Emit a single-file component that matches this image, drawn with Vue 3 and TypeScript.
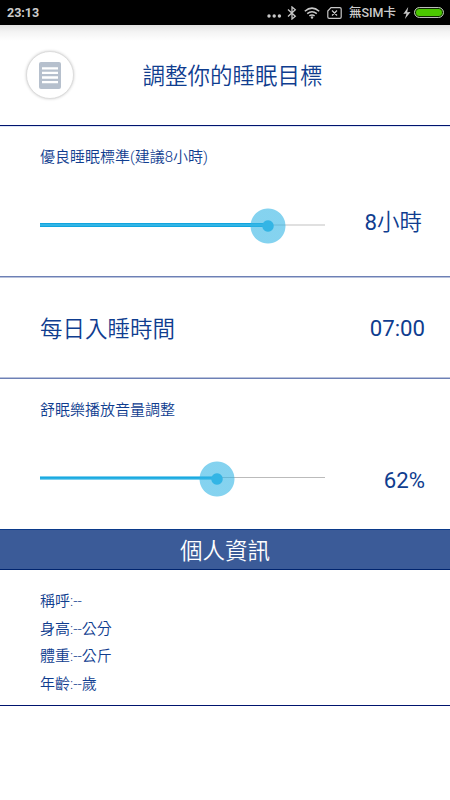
<script setup lang="ts">
import { ref, computed } from 'vue'

const hours = ref(8)
const maxHours = 10
const volume = ref(62)
const bedtime = ref('07:00')

const hoursPercent = computed(() => (hours.value / maxHours) * 100)

const profile = [
  { label: '稱呼', value: '--' },
  { label: '身高', value: '--公分' },
  { label: '體重', value: '--公斤' },
  { label: '年齡', value: '--歲' },
]
</script>

<template>
  <div class="screen">
    <div class="status">
      <span class="clock">23:13</span>
      <svg class="dots" width="15" height="4" viewBox="0 0 15 4">
        <circle cx="2" cy="2" r="1.7" /><circle cx="7.2" cy="2" r="1.7" /><circle cx="12.4" cy="2" r="1.7" />
      </svg>
      <svg class="bluetooth" width="10" height="14" viewBox="0 0 10 14">
        <path d="M1 3.6 8.3 10.2 5 13V1l3.3 2.8L1 10.4" />
      </svg>
      <svg class="wifi" width="16" height="12" viewBox="0 0 16 12">
        <path d="M.8 4.3Q8-2 15.2 4.3M3.2 6.7q4.8-4 9.6 0M5.4 8.9q2.6-2 5.2 0" />
        <circle cx="8" cy="10.5" r="1.2" />
      </svg>
      <svg class="sim" width="15" height="12" viewBox="0 0 15 12">
        <path d="M4 .7h8.8q1.4 0 1.4 1.3v8q0 1.3-1.4 1.3H2.2Q.8 11.3 .8 10V4zM5 3.5l5 5M10 3.5l-5 5" />
      </svg>
      <span class="carrier">無SIM卡</span>
      <svg class="bolt" width="8" height="12" viewBox="0 0 8 12">
        <path d="M5.2 0 .3 6.9l3.2-.3L1.9 12 7.5 4.9l-3.3.3z" />
      </svg>
      <span class="battery"></span>
    </div>

    <header class="header">
      <button class="menu" aria-label="選單">
        <svg width="22" height="27" viewBox="0 0 22 27">
          <rect width="22" height="27" rx="2" fill="#b6c0cd" />
          <path d="M3 6.3h16M3 10.9h16M3 15.5h16M3 20.1h16" stroke="#fff" stroke-width="2.3" />
        </svg>
      </button>
      <h1 class="title">調整你的睡眠目標</h1>
    </header>

    <section class="goal">
      <p class="caption">優良睡眠標準(建議8小時)</p>
      <div class="row">
        <div class="slider">
          <div class="fill" :style="{ width: hoursPercent + '%' }"><i class="thumb"></i></div>
        </div>
        <span class="value"><span class="number">{{ hours }}</span>小時</span>
      </div>
    </section>

    <section class="bedtime">
      <span class="label">每日入睡時間</span>
      <span class="number">{{ bedtime }}</span>
    </section>

    <section class="volume">
      <p class="caption">舒眠樂播放音量調整</p>
      <div class="row">
        <div class="slider">
          <div class="fill" :style="{ width: volume + '%' }"><i class="thumb"></i></div>
        </div>
        <span class="value number">{{ volume }}%</span>
      </div>
    </section>

    <h2 class="banner">個人資訊</h2>

    <ul class="profile">
      <li v-for="item in profile" :key="item.label">{{ item.label }}:{{ item.value }}</li>
    </ul>
  </div>
</template>

<style>
body {
  background: #fff;
}
</style>

<style scoped>
.screen {
  width: 450px;
  height: 800px;
  overflow: hidden;
  background: #fff;
  color: #0f3d8f;
  font-family: Roboto, "Noto Sans CJK TC", sans-serif;
  font-size: 22.5px;
  font-weight: 350;
}
.screen * {
  box-sizing: border-box;
}
.status {
  display: flex;
  align-items: center;
  height: 25px;
  padding: 0 6px 0 7px;
  background: #000;
  color: #ccc;
  font-size: 12.5px;
  line-height: 24px;
  font-weight: 500;
}
.status svg {
  flex: none;
  fill: #c8c8c8;
}
.clock {
  margin-right: auto;
  font-weight: 700;
}
.dots {
  margin: 7px 5px 0 0;
}
.status .bluetooth {
  margin-right: 7px;
  fill: none;
  stroke: #c8c8c8;
  stroke-width: 1.3;
}
.status .wifi {
  margin-right: 7px;
}
.wifi path {
  fill: none;
  stroke: #c8c8c8;
  stroke-width: 1.5;
}
.status .sim {
  margin-right: 7px;
  fill: none;
  stroke: #c8c8c8;
  stroke-width: 1.2;
}
.carrier {
  width: 47px;
  white-space: nowrap;
}
.bolt {
  margin: 1px 3px 0 7px;
}
.battery {
  width: 30px;
  height: 11px;
  border: 1px solid #bbb;
  border-radius: 6px;
  background: #4bc800;
  box-shadow: inset 0 0 0 1px #102800;
}
.header {
  display: flex;
  align-items: center;
  height: 101px;
  padding-left: 26px;
  border-bottom: 1px solid #00146e;
  background: linear-gradient(#e2e2e2, #f4f4f4 7px, #fff 16px);
}
.menu {
  display: flex;
  align-items: center;
  justify-content: center;
  width: 48px;
  height: 48px;
  padding: 0;
  border: 1px solid #ddd;
  border-radius: 50%;
  background: #fff;
  box-shadow: 0 0 3px #ccc;
}
.title {
  margin: 2px 0 0 68.5px;
  font-size: 22.5px;
  font-weight: 350;
  line-height: 30px;
}
.caption {
  margin: 0;
  font-size: 15px;
  line-height: 20px;
}
.number {
  font-size: 22.2px;
  font-weight: 380;
}
.goal {
  height: 152px;
  padding: 20px 25px 0 40px;
  border-top: 1px solid #dde6f5;
  border-bottom: 2px solid;
  border-image: linear-gradient(#dde6f5 1px, #6d80b5 1px, #6d80b5 151px, #b9c2dc 151px) 1 0 2;
}
.row {
  display: flex;
  align-items: center;
  justify-content: space-between;
  height: 36px;
  margin-top: 40px;
}
.slider {
  display: flex;
  align-items: center;
  width: 285px;
  height: 36px;
  background: linear-gradient(#e0e0e0, #e0e0e0) 0 17px / 100% 2px no-repeat;
}
.fill {
  position: relative;
  height: 4px;
  background: linear-gradient(#10a5df 1px, #33b5e5 1px, #33b5e5 3px, #10a5df 3px);
}
.thumb {
  position: absolute;
  top: -15px;
  right: -18px;
  width: 36px;
  height: 36px;
  border-radius: 50%;
  background: radial-gradient(circle, #33b5e5 5.2px, rgba(51, 181, 229, 0.6) 6.2px, rgba(51, 181, 229, 0.6) 17px, transparent 18px);
}
.goal .value {
  margin: -10px 3px 0 0;
}
.bedtime {
  display: flex;
  align-items: center;
  justify-content: space-between;
  height: 101px;
  padding: 0 25px 0 40px;
  border-bottom: 1px solid #6d80b5;
  box-shadow: inset 0 -1px #b9c2dc;
}
.bedtime .label {
  margin-top: -2px;
}
.volume {
  height: 150px;
  padding: 21px 25px 0 40px;
}
.volume .slider {
  background: linear-gradient(#bbb, #bbb) 0 17px / 100% 1px no-repeat;
}
.volume .fill {
  margin-top: -1px;
  background: linear-gradient(#7dd0ef 1px, #10a5df 1px, #33b5e5 3px, #7dd0ef 3px);
}
.volume .thumb {
  top: -15px;
  right: -18px;
}
.volume .value {
  margin-top: 4px;
}
.banner {
  height: 41px;
  margin: 0;
  border: solid #0b3a8a;
  border-width: 1px 0;
  border-bottom-color: #00246e;
  background: #3b5b98;
  color: #fff;
  font-size: 22.5px;
  font-weight: 350;
  line-height: 42px;
  text-align: center;
}
.profile {
  height: 136px;
  margin: 0;
  padding: 18px 40px 0;
  border-bottom: 1px solid #00146e;
  list-style: none;
  font-size: 15px;
  line-height: 27.5px;
}
</style>
